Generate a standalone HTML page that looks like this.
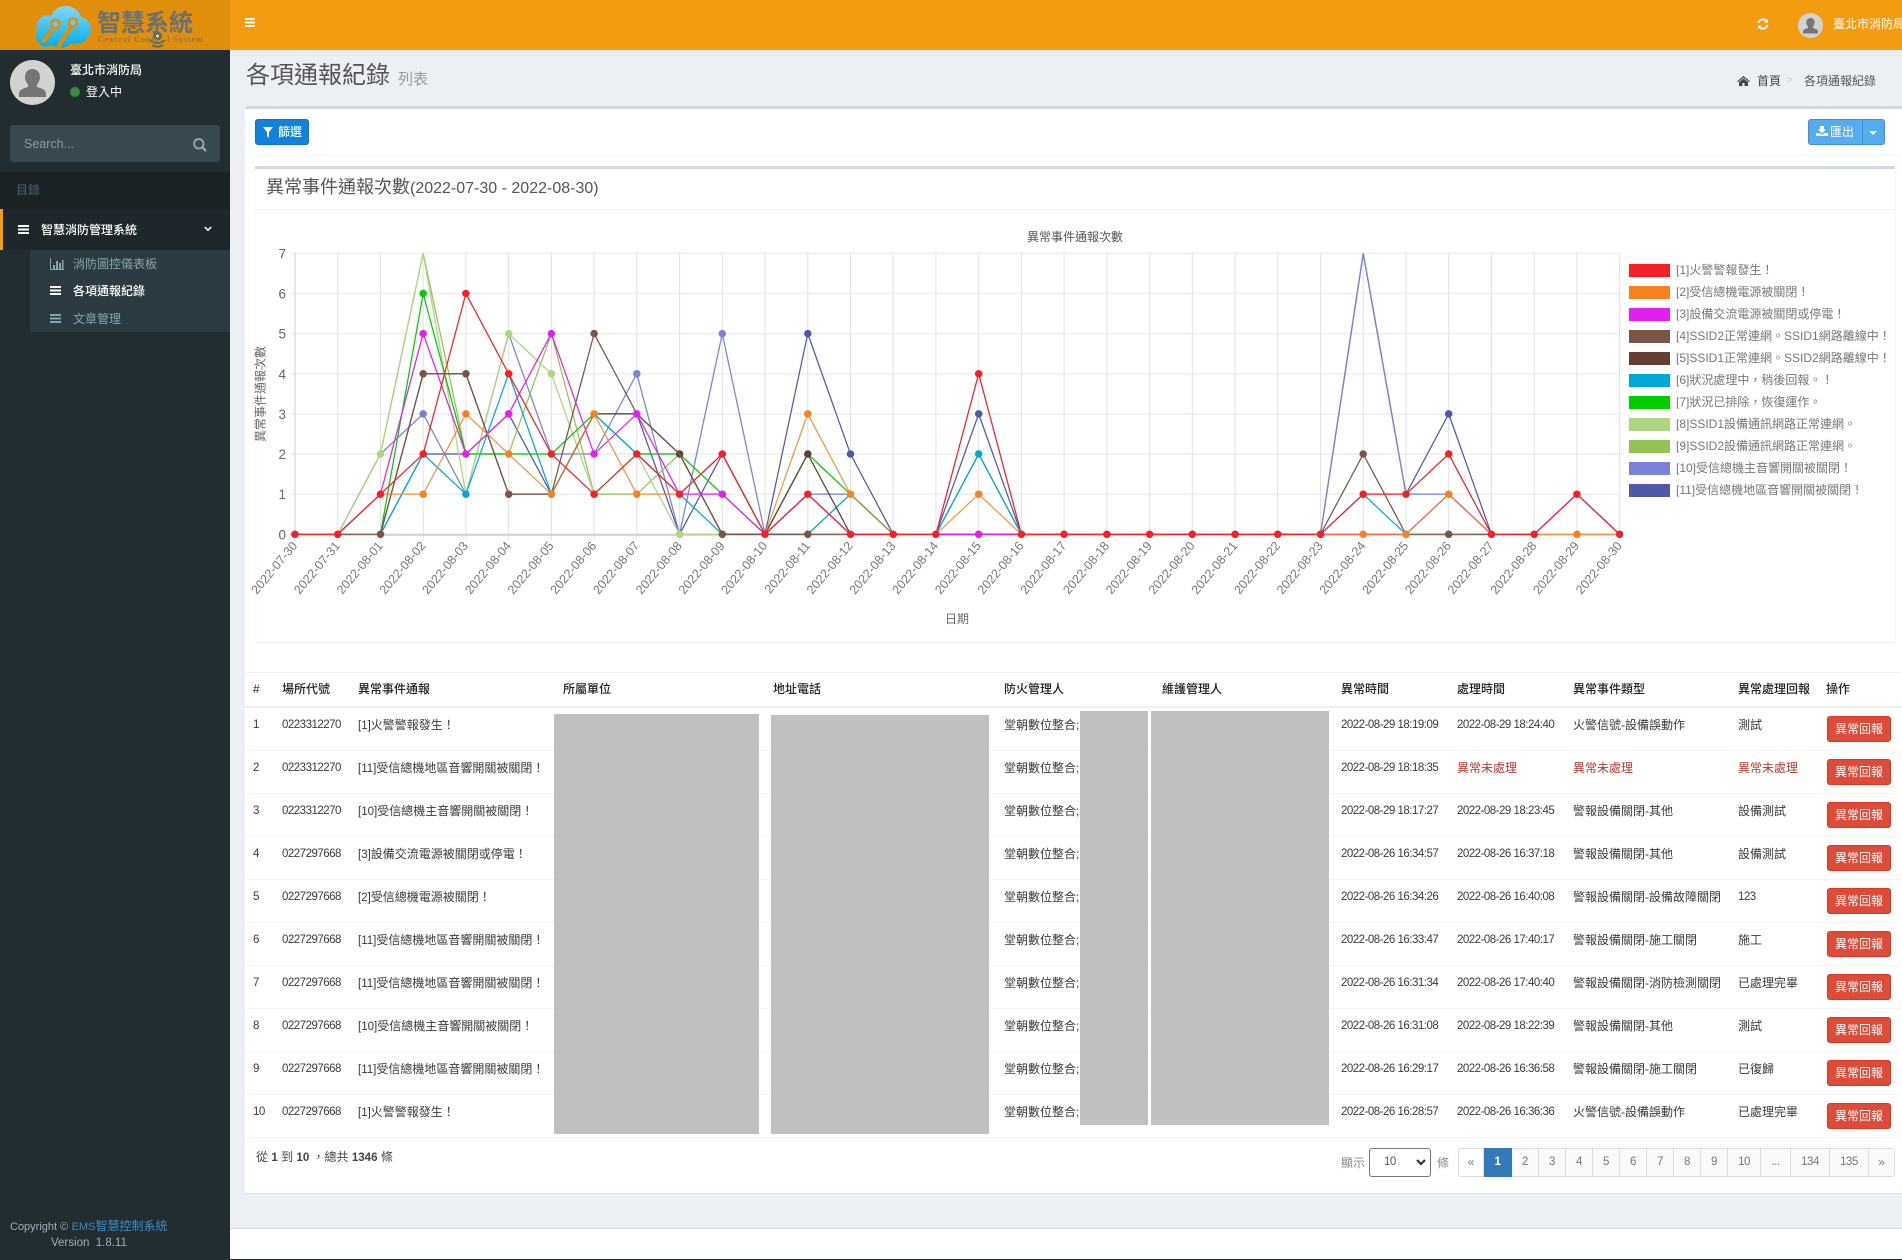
<!DOCTYPE html>
<html lang="zh-Hant"><head><meta charset="utf-8"><title>各項通報紀錄</title>
<style>
html,body{margin:0;padding:0}
body{width:1902px;height:1260px;overflow:hidden;position:relative;background:#222d32;font-family:"Liberation Sans","Noto Sans CJK TC",sans-serif;font-size:12px;color:#333}
.a{position:absolute;white-space:nowrap}
.n{font-size:11.5px;letter-spacing:-.5px}
.k{font-size:11.5px}
svg{position:absolute;overflow:visible}
table{position:absolute;left:245px;top:672px;width:1656px;border-collapse:collapse;table-layout:fixed}
th{height:34px;box-sizing:border-box;font-weight:500;text-align:left;padding:0 0 0 8px;color:#222;line-height:33px;border-top:1px solid #f0f0f0;border-bottom:2px solid #f0f0f0}
td{height:43px;box-sizing:border-box;vertical-align:top;padding:8px 0 0 8px;line-height:18px;border-bottom:1px solid #f4f4f4;white-space:nowrap;overflow:hidden;color:#3a3a3a}
td.r{color:#b03a33}
td.b{padding:8px 0 0 8px}
.btn{display:block;width:64px;height:26px;box-sizing:border-box;background:#dd4b39;border:1px solid #d73925;border-radius:3px;color:#fff;text-align:center;line-height:24px}
.g{position:absolute;background:#c0c0c0}
.p{position:absolute;top:1148px;height:29px;box-sizing:border-box;border:1px solid #ddd;border-left:0;background:#fafafa;color:#777;text-align:center;line-height:27px}
.s{transform:translate(295px,534.3px) scale(42.73,-40.13);vector-effect:non-scaling-stroke;fill:none;stroke-width:1.25}
.m{fill:none;stroke-linecap:round;stroke-width:7.5}
</style></head><body>

<!-- header -->
<div class="a" style="left:0;top:0;width:230px;height:50px;background:#e08e0b"></div>
<div class="a" style="left:230px;top:0;width:1672px;height:50px;background:#f39c12"></div>
<svg style="left:0;top:0" width="230" height="50">
<defs><linearGradient id="c" x1="0" y1="0" x2="0" y2="1"><stop offset="0" stop-color="#84d6f0"/><stop offset="1" stop-color="#00aeea"/></linearGradient></defs>
<path d="M46 47C37 46 34 36 37 29C35 20 44 13 51 16C56 2 77 3 81 17C91 19 94 31 88 37C85 44 76 44 70 44C64 50 55 48 52 45Z" fill="url(#c)"/>
<path d="M43 42L53 29M58 47L71 27" stroke="#e08e0b" stroke-width="4.500" fill="none"/>
<circle cx="55.500" cy="24" r="4" fill="#6cc9ea" stroke="#e08e0b" stroke-width="2.500"/><circle cx="73" cy="22.500" r="4" fill="#6cc9ea" stroke="#e08e0b" stroke-width="2.500"/>
<circle cx="157.500" cy="36" r="4.500" fill="#5f6a6a"/><circle cx="157.500" cy="36" r="1.300" fill="#fff"/>
<path d="M150 40q7.500 6 15 0M152 45q5.500 3.500 11 0" stroke="#5f6a6a" stroke-width="2" fill="none"/>
</svg>
<div class="a" style="left:97px;top:7px;font-size:24px;line-height:34px;font-weight:700;color:#697270">智慧系統</div>
<div class="a" style="left:98px;top:33px;font:700 8.500px/12px 'Liberation Serif',serif;letter-spacing:.75px;color:#8b7b4a">Central Contr<span style="visibility:hidden">o</span>&nbsp;l System</div>
<svg style="left:245px;top:18px" width="10" height="9"><path d="M0 0h10v2H0zM0 3.500h10v2H0zM0 7h10v2H0z" fill="#fff"/></svg>
<svg style="left:1757px;top:18px" width="12" height="12" viewBox="0 0 12 12"><path d="M1.500 5A4.600 4.600 0 0 1 9.500 3M10.500 7A4.600 4.600 0 0 1 2.500 9" fill="none" stroke="#fff" stroke-width="1.800"/><path d="M11 .8V4.500H7.300zM1 11.200V7.500H4.700z" fill="#fff"/></svg>
<svg style="left:1798px;top:13px" width="25" height="25" viewBox="0 0 45 45"><circle cx="22.500" cy="22.500" r="22.500" fill="#d2d2d2"/><path d="M22.500 9c5 0 7.500 4 7.500 8 0 3-1.500 6-3 7.500v2.500c4 1.500 9 2 9 7v3H9v-3c0-5 5-5.500 9-7v-2.500c-1.500-1.500-3-4.500-3-7.500 0-4 2.500-8 7.500-8z" fill="#757575"/></svg>
<div class="a" style="left:1833px;top:15px;line-height:18px;color:#fff;width:69px;overflow:hidden">臺北市消防局</div>

<!-- sidebar -->
<svg style="left:10px;top:60px" width="45" height="45" viewBox="0 0 45 45"><circle cx="22.500" cy="22.500" r="22.500" fill="#d2d2d2"/><path d="M22.500 9c5 0 7.500 4 7.500 8 0 3-1.500 6-3 7.500v2.500c4 1.500 9 2 9 7v3H9v-3c0-5 5-5.500 9-7v-2.500c-1.500-1.500-3-4.500-3-7.500 0-4 2.500-8 7.500-8z" fill="#757575"/></svg>
<div class="a" style="left:70px;top:61px;line-height:18px;color:#fff;font-weight:500">臺北市消防局</div>
<div class="a" style="left:70px;top:87px;width:10px;height:10px;border-radius:5px;background:#3c8a42"></div>
<div class="a" style="left:86px;top:83px;line-height:18px;color:#fff">登入中</div>
<div class="a" style="left:10px;top:125px;width:210px;height:37px;background:#374850;border-radius:3px"></div>
<div class="a" style="left:24px;top:135px;line-height:18px;font-size:12.500px;color:#8c9ca4">Search...</div>
<svg style="left:193px;top:138px" width="14" height="14" viewBox="0 0 14 14"><circle cx="5.800" cy="5.800" r="4.700" fill="none" stroke="#9aa9b0" stroke-width="1.900"/><path d="M9.200 9.200L13 13" stroke="#9aa9b0" stroke-width="2.400"/></svg>
<div class="a" style="left:0;top:172px;width:230px;height:37px;background:#1a2226"></div>
<div class="a" style="left:16px;top:181px;line-height:18px;color:#4b646f">目錄</div>
<div class="a" style="left:0;top:209px;width:230px;height:41px;background:#1e282c"></div>
<div class="a" style="left:0;top:209px;width:3px;height:41px;background:#f39c12"></div>
<svg style="left:18px;top:225px" width="11" height="9"><path d="M0 0h11v2H0zM0 3.500h11v2H0zM0 7h11v2H0z" fill="#fff"/></svg>
<div class="a" style="left:41px;top:221px;line-height:18px;color:#fff;font-weight:500">智慧消防管理系統</div>
<svg style="left:204px;top:226px" width="8" height="6"><path d="M.8 1L4 4.200 7.200 1" fill="none" stroke="#fff" stroke-width="1.500"/></svg>
<div class="a" style="left:30px;top:250px;width:200px;height:82px;background:#2c3b41"></div>
<svg style="left:50px;top:258px" width="14" height="12"><path d="M.5 0v11.500H14" fill="none" stroke="#8aa4af"/><path d="M3 7h2v4H3zM6 3h2v8H6zM9 5h2v6H9zM12 2h1.500v9H12z" fill="#8aa4af"/></svg>
<div class="a" style="left:73px;top:255px;line-height:18px;color:#8aa4af">消防圖控儀表板</div>
<svg style="left:50px;top:286px" width="11" height="9"><path d="M0 0h11v2H0zM0 3.500h11v2H0zM0 7h11v2H0z" fill="#fff"/></svg>
<div class="a" style="left:73px;top:281.500px;line-height:18px;color:#fff;font-weight:500">各項通報紀錄</div>
<svg style="left:50px;top:314px" width="11" height="9"><path d="M0 0h11v2H0zM0 3.500h11v2H0zM0 7h11v2H0z" fill="#8aa4af"/></svg>
<div class="a" style="left:73px;top:310px;line-height:18px;color:#8aa4af">文章管理</div>
<div class="a" style="left:10px;top:1217px;line-height:18px;color:#9db0b8"><span style="font-size:11px">Copyright ©</span> <span style="color:#3c8dbc"><span style="font-size:11px">EMS</span>智慧控制系統</span></div>
<div class="a" style="left:51px;top:1234px;line-height:18px;font-size:11.500px;color:#9db0b8">Version &nbsp;1.8.11</div>

<!-- content -->
<div class="a" style="left:230px;top:50px;width:1672px;height:1178px;background:#ecf0f5"></div>
<div class="a" style="left:230px;top:1228px;width:1672px;height:31px;background:#fff;border-top:1px solid #d2d6de;box-sizing:border-box"></div>
<div class="a" style="left:246px;top:59px;font-size:24px;line-height:34px;color:#555">各項通報紀錄</div>
<div class="a" style="left:398px;top:70px;font-size:15px;line-height:20px;color:#999">列表</div>
<svg style="left:1737px;top:76px" width="13" height="10" viewBox="0 0 13 10"><path d="M6.500 0L13 5.400l-.8.700L6.500 1.600.8 6.100 0 5.400zM2 6l4.500-3.500L11 6v4H7.500V7h-2v3H2z" fill="#444"/></svg>
<div class="a" style="left:1757px;top:72px;line-height:18px;color:#444">首頁</div>
<div class="a" style="left:1787px;top:72px;line-height:18px;font-size:10px;color:#ccc">&gt;</div>
<div class="a" style="left:1804px;top:72px;line-height:18px;color:#555">各項通報紀錄</div>

<!-- main box -->
<div class="a" style="left:245px;top:106px;width:1657px;height:1088px;box-sizing:border-box;background:#fff;border-top:3px solid #d2d6de;border-bottom:1px solid #dcdfe3;border-radius:3px 0 0 3px"></div>
<div class="a" style="left:255px;top:119px;width:54px;height:26px;box-sizing:border-box;background:#1183dc;border:1px solid #0d74c4;border-radius:3px;color:#fff;line-height:24px;padding-left:22px;font-weight:500">篩選</div>
<svg style="left:263px;top:127px" width="10" height="11"><path d="M0 0h10L6 5v6L4 9V5z" fill="#fff"/></svg>
<div class="a" style="left:1808px;top:119px;width:77px;height:26px;box-sizing:border-box;background:#55acee;border:1px solid #3f8fca;border-radius:3px"></div>
<div class="a" style="left:1861.500px;top:120px;width:1px;height:24px;background:#3f8fca"></div>
<svg style="left:1816px;top:126px" width="12" height="10" viewBox="0 0 12 10"><path d="M4 0h4v3.500h2.200L6 7.300 1.800 3.500H4zM0 7h3.500L6 8.700 8.500 7H12v3H0z" fill="#fff"/></svg>
<div class="a" style="left:1830px;top:123px;line-height:18px;color:#fff">匯出</div>
<svg style="left:1869px;top:131px" width="8" height="4"><path d="M0 0h8L4 4z" fill="#fff"/></svg>
<div class="a" style="left:245px;top:155px;width:1657px;height:1px;background:#f4f4f4"></div>
<div class="a" style="left:255px;top:166px;width:1640px;height:3px;background:#d2d6de"></div>
<div class="a" style="left:1895px;top:169px;width:1px;height:473px;background:#f6f6f6"></div>
<div class="a" style="left:255px;top:169px;width:1px;height:473px;background:#fbfbfb"></div>
<div class="a" style="left:266px;top:174px;font-size:18px;line-height:26px;color:#555">異常事件通報次數<span style="font-size:16px">(2022-07-30 - 2022-08-30)</span></div>
<div class="a" style="left:255px;top:209px;width:1640px;height:1px;background:#f4f4f4"></div>
<div class="a" style="left:255px;top:642px;width:1640px;height:1px;background:#eeeeee"></div>

<!-- chart -->
<svg style="left:0;top:0" width="1902" height="660" font-family="'Liberation Sans','Noto Sans CJK TC',sans-serif">
<g stroke="#f1f1f1" stroke-width="2"><path d="M290 253.400H1620M290 293.500H1620M290 333.600H1620M290 373.800H1620M290 413.900H1620M290 454H1620M290 494.200H1620"/></g>
<g stroke="#e2e2e2" stroke-width="1" fill="none"><path d="M295 253V540M337.700 253V540M380.500 253V540M423.200 253V540M465.900 253V540M508.700 253V540M551.400 253V540M594.100 253V540M636.800 253V540M679.600 253V540M722.300 253V540M765 253V540M807.800 253V540M850.500 253V540M893.200 253V540M935.900 253V540M978.700 253V540M1021.400 253V540M1064.100 253V540M1106.900 253V540M1149.600 253V540M1192.300 253V540M1235.100 253V540M1277.800 253V540M1320.500 253V540M1363.200 253V540M1406 253V540M1448.700 253V540M1491.400 253V540M1534.200 253V540M1576.900 253V540M1619.600 253V540"/></g>
<path d="M295 253V535" stroke="#cfcfcf"/><path d="M290 534.800H1620" stroke="#cfcfcf" stroke-width="2"/>
<g font-size="13.500" fill="#666" text-anchor="end"><text x="286" y="258.500">7</text><text x="286" y="298.500">6</text><text x="286" y="338.500">5</text><text x="286" y="379">4</text><text x="286" y="419">3</text><text x="286" y="459">2</text><text x="286" y="499">1</text><text x="286" y="539.500">0</text></g>
<text x="1075" y="241" font-size="12" fill="#555" text-anchor="middle">異常事件通報次數</text>
<text x="957" y="623" font-size="12" fill="#666" text-anchor="middle">日期</text>
<text transform="translate(264.500 394) rotate(-90)" font-size="12" fill="#666" text-anchor="middle">異常事件通報次數</text>
<g font-size="12.500" fill="#777" text-anchor="end">
<text transform="translate(298 546) rotate(-50)">2022-07-30</text>
<text transform="translate(340.700 546) rotate(-50)">2022-07-31</text>
<text transform="translate(383.500 546) rotate(-50)">2022-08-01</text>
<text transform="translate(426.200 546) rotate(-50)">2022-08-02</text>
<text transform="translate(468.900 546) rotate(-50)">2022-08-03</text>
<text transform="translate(511.700 546) rotate(-50)">2022-08-04</text>
<text transform="translate(554.400 546) rotate(-50)">2022-08-05</text>
<text transform="translate(597.100 546) rotate(-50)">2022-08-06</text>
<text transform="translate(639.800 546) rotate(-50)">2022-08-07</text>
<text transform="translate(682.600 546) rotate(-50)">2022-08-08</text>
<text transform="translate(725.300 546) rotate(-50)">2022-08-09</text>
<text transform="translate(768 546) rotate(-50)">2022-08-10</text>
<text transform="translate(810.800 546) rotate(-50)">2022-08-11</text>
<text transform="translate(853.500 546) rotate(-50)">2022-08-12</text>
<text transform="translate(896.200 546) rotate(-50)">2022-08-13</text>
<text transform="translate(938.900 546) rotate(-50)">2022-08-14</text>
<text transform="translate(981.700 546) rotate(-50)">2022-08-15</text>
<text transform="translate(1024.400 546) rotate(-50)">2022-08-16</text>
<text transform="translate(1067.100 546) rotate(-50)">2022-08-17</text>
<text transform="translate(1109.900 546) rotate(-50)">2022-08-18</text>
<text transform="translate(1152.600 546) rotate(-50)">2022-08-19</text>
<text transform="translate(1195.300 546) rotate(-50)">2022-08-20</text>
<text transform="translate(1238.100 546) rotate(-50)">2022-08-21</text>
<text transform="translate(1280.800 546) rotate(-50)">2022-08-22</text>
<text transform="translate(1323.500 546) rotate(-50)">2022-08-23</text>
<text transform="translate(1366.200 546) rotate(-50)">2022-08-24</text>
<text transform="translate(1409 546) rotate(-50)">2022-08-25</text>
<text transform="translate(1451.700 546) rotate(-50)">2022-08-26</text>
<text transform="translate(1494.400 546) rotate(-50)">2022-08-27</text>
<text transform="translate(1537.200 546) rotate(-50)">2022-08-28</text>
<text transform="translate(1579.900 546) rotate(-50)">2022-08-29</text>
<text transform="translate(1622.600 546) rotate(-50)">2022-08-30</text>
</g>

<!-- S11 -->
<polyline class="s" stroke="#5059a8" points="2,0 3,2 4,2 5,3 6,1 7,3 8,3 9,0 10,2 11,0 12,5 13,2 14,0 15,0 16,3 17,0 24,0 25,7 26,1 27,3 28,0"/>
<path class="m" stroke="#5059a8" d="M807.800 333.600h0M850.500 454h0M978.700 413.900h0M1448.700 413.900h0"/>
<!-- S10 -->
<polyline class="s" stroke="#7a82d8" points="1,0 2,2 3,3 4,1 5,5 6,2 7,2 8,4 9,0 10,5 11,0 12,1 13,1 14,0 24,0 25,7 26,1 27,1 28,0"/>
<path class="m" stroke="#7a82d8" d="M423.200 413.900h0M636.800 373.800h0M722.300 333.600h0"/>
<!-- S9 -->
<polyline class="s" stroke="#92c356" points="1,0 2,2 3,7 4,2 5,2 6,5 7,1 8,1 9,2 10,0 12,0 13,1 14,0"/>
<!-- S8 -->
<polyline class="s" stroke="#aed581" points="1,0 2,2 3,7 4,1 5,5 6,4 7,1 8,2 9,0 10,0 11,0"/>
<path class="m" stroke="#aed581" d="M380.500 454h0M508.700 333.600h0M551.400 373.800h0M679.600 534.300h0"/>
<!-- S7 -->
<polyline class="s" stroke="#00cc00" points="2,0 3,6 4,2 5,2 6,2 7,3 8,2 9,2 10,1 11,0 12,2 13,1 14,0 15,0 16,2 17,0"/>
<path class="m" stroke="#00cc00" d="M423.200 293.500h0"/>
<!-- S6 -->
<polyline class="s" stroke="#00a8d8" points="2,0 3,2 4,1 5,4 6,1 7,3 8,2 9,1 10,0 12,0 13,1 14,0 15,0 16,2 17,0 24,0 25,1 26,0"/>
<path class="m" stroke="#00a8d8" d="M465.900 494.200h0M978.700 454h0"/>
<!-- S5 -->
<polyline class="s" stroke="#5d4037" points="2,0 3,4 4,4 5,1 6,1 7,3 8,3 9,2 10,0 11,0 12,2 13,0"/>
<path class="m" stroke="#5d4037" d="M679.600 454h0M807.800 454h0"/>
<!-- S4 -->
<polyline class="s" stroke="#795548" points="1,0 2,0 3,4 4,4 5,1 6,1 7,5 8,3 9,2 10,0 11,0 24,0 25,2 26,0 28,0"/>
<path class="m" stroke="#795548" d="M380.500 534.300h0M423.200 373.800h0M465.900 373.800h0M508.700 494.200h0M594.100 333.600h0M722.300 534.300h0M807.800 534.300h0M1363.200 454h0M1448.700 534.300h0"/>
<!-- S3 -->
<polyline class="s" stroke="#e020f0" points="1,0 2,1 3,5 4,2 5,3 6,5 7,2 8,3 9,1 10,1 11,0 12,1 13,0 26,0 27,1 28,0 29,0 30,1 31,0"/>
<path class="m" stroke="#e020f0" d="M423.200 333.600h0M465.900 454h0M508.700 413.900h0M551.400 333.600h0M594.100 454h0M636.800 413.900h0M722.300 494.200h0M978.700 534.300h0"/>
<!-- S2 -->
<polyline class="s" stroke="#f58220" stroke-opacity=".85" points="0,0 1,0 2,1 3,1 4,3 5,2 6,1 7,3 8,1 9,1 10,2 11,0 12,3 13,1 14,0 15,0 16,1 17,0 26,0 27,1 28,0 31,0"/>
<path class="m" stroke="#f58220" d="M423.200 494.200h0M465.900 413.900h0M508.700 454h0M551.400 494.200h0M594.100 413.900h0M636.800 494.200h0M807.800 413.900h0M850.500 494.200h0M978.700 494.200h0M1363.200 534.300h0M1406 534.300h0M1448.700 494.200h0M1576.900 534.300h0"/>
<!-- S1 -->
<polyline class="s" stroke="#f42028" points="0,0 1,0 2,1 3,2 4,6 5,4 6,2 7,1 8,2 9,1 10,2 11,0 12,1 13,0 14,0 15,0 16,4 17,0 24,0 25,1 26,1 27,2 28,0 29,0 30,1 31,0"/>
<path class="m" stroke="#f42028" d="M295 534.300h0M337.700 534.300h0M380.500 494.200h0M423.200 454h0M465.900 293.500h0M508.700 373.800h0M551.400 454h0M594.100 494.200h0M636.800 454h0M679.600 494.200h0M722.300 454h0M765 534.300h0M807.800 494.200h0M850.500 534.300h0M893.200 534.300h0M935.900 534.300h0M978.700 373.800h0M1021.400 534.300h0M1064.100 534.300h0M1106.900 534.300h0M1149.600 534.300h0M1192.300 534.300h0M1235.100 534.300h0M1277.800 534.300h0M1320.500 534.300h0M1363.200 494.200h0M1406 494.200h0M1448.700 454h0M1491.400 534.300h0M1534.200 534.300h0M1576.900 494.200h0M1619.600 534.300h0"/>

<!-- legend -->
<g font-size="12" fill="#777">
<rect x="1629" y="264" width="41" height="13" fill="#f42028"/><text x="1676" y="274">[1]火警警報發生！</text>
<rect x="1629" y="286" width="41" height="13" fill="#f58220"/><text x="1676" y="296">[2]受信總機電源被關閉！</text>
<rect x="1629" y="308" width="41" height="13" fill="#e020f0"/><text x="1676" y="318">[3]設備交流電源被關閉或停電！</text>
<rect x="1629" y="330" width="41" height="13" fill="#795548"/><text x="1676" y="340">[4]SSID2正常連網。SSID1網路離線中！</text>
<rect x="1629" y="352" width="41" height="13" fill="#653f32"/><text x="1676" y="362">[5]SSID1正常連網。SSID2網路離線中！</text>
<rect x="1629" y="374" width="41" height="13" fill="#00a8d8"/><text x="1676" y="384">[6]狀況處理中，稍後回報。！</text>
<rect x="1629" y="396" width="41" height="13" fill="#00cc00"/><text x="1676" y="406">[7]狀況已排除，恢復運作。</text>
<rect x="1629" y="418" width="41" height="13" fill="#aed581"/><text x="1676" y="428">[8]SSID1設備通訊網路正常連網。</text>
<rect x="1629" y="440" width="41" height="13" fill="#92c356"/><text x="1676" y="450">[9]SSID2設備通訊網路正常連網。</text>
<rect x="1629" y="462" width="41" height="13" fill="#7a82d8"/><text x="1676" y="472">[10]受信總機主音響開關被關閉！</text>
<rect x="1629" y="484" width="41" height="13" fill="#5059a8"/><text x="1676" y="494">[11]受信總機地區音響開關被關閉！</text>
</g>
</svg>

<!-- table -->
<table>
<colgroup><col style="width:29px"><col style="width:76px"><col style="width:205px"><col style="width:210px"><col style="width:231px"><col style="width:158px"><col style="width:179px"><col style="width:116px"><col style="width:116px"><col style="width:165px"><col style="width:89px"><col style="width:82px"></colgroup>
<thead><tr><th>#</th><th>場所代號</th><th>異常事件通報</th><th>所屬單位</th><th>地址電話</th><th>防火管理人</th><th>維護管理人</th><th>異常時間</th><th>處理時間</th><th>異常事件類型</th><th>異常處理回報</th><th style="padding-left:7px">操作</th></tr></thead>
<tbody>
<tr><td class="n">1</td><td class="n">0223312270</td><td><span class="k">[1]</span>火警警報發生！</td><td></td><td></td><td>堂朝數位整合;</td><td></td><td class="n">2022-08-29 18:19:09</td><td class="n">2022-08-29 18:24:40</td><td>火警信號-設備誤動作</td><td>測試</td><td class="b"><a class="btn">異常回報</a></td></tr>
<tr><td class="n">2</td><td class="n">0223312270</td><td><span class="k">[11]</span>受信總機地區音響開關被關閉！</td><td></td><td></td><td>堂朝數位整合;</td><td></td><td class="n">2022-08-29 18:18:35</td><td class="r">異常未處理</td><td class="r">異常未處理</td><td class="r">異常未處理</td><td class="b"><a class="btn">異常回報</a></td></tr>
<tr><td class="n">3</td><td class="n">0223312270</td><td><span class="k">[10]</span>受信總機主音響開關被關閉！</td><td></td><td></td><td>堂朝數位整合;</td><td></td><td class="n">2022-08-29 18:17:27</td><td class="n">2022-08-29 18:23:45</td><td>警報設備關閉-其他</td><td>設備測試</td><td class="b"><a class="btn">異常回報</a></td></tr>
<tr><td class="n">4</td><td class="n">0227297668</td><td><span class="k">[3]</span>設備交流電源被關閉或停電！</td><td></td><td></td><td>堂朝數位整合;</td><td></td><td class="n">2022-08-26 16:34:57</td><td class="n">2022-08-26 16:37:18</td><td>警報設備關閉-其他</td><td>設備測試</td><td class="b"><a class="btn">異常回報</a></td></tr>
<tr><td class="n">5</td><td class="n">0227297668</td><td><span class="k">[2]</span>受信總機電源被關閉！</td><td></td><td></td><td>堂朝數位整合;</td><td></td><td class="n">2022-08-26 16:34:26</td><td class="n">2022-08-26 16:40:08</td><td>警報設備關閉-設備故障關閉</td><td class="n">123</td><td class="b"><a class="btn">異常回報</a></td></tr>
<tr><td class="n">6</td><td class="n">0227297668</td><td><span class="k">[11]</span>受信總機地區音響開關被關閉！</td><td></td><td></td><td>堂朝數位整合;</td><td></td><td class="n">2022-08-26 16:33:47</td><td class="n">2022-08-26 17:40:17</td><td>警報設備關閉-施工關閉</td><td>施工</td><td class="b"><a class="btn">異常回報</a></td></tr>
<tr><td class="n">7</td><td class="n">0227297668</td><td><span class="k">[11]</span>受信總機地區音響開關被關閉！</td><td></td><td></td><td>堂朝數位整合;</td><td></td><td class="n">2022-08-26 16:31:34</td><td class="n">2022-08-26 17:40:40</td><td>警報設備關閉-消防檢測關閉</td><td>已處理完畢</td><td class="b"><a class="btn">異常回報</a></td></tr>
<tr><td class="n">8</td><td class="n">0227297668</td><td><span class="k">[10]</span>受信總機主音響開關被關閉！</td><td></td><td></td><td>堂朝數位整合;</td><td></td><td class="n">2022-08-26 16:31:08</td><td class="n">2022-08-29 18:22:39</td><td>警報設備關閉-其他</td><td>測試</td><td class="b"><a class="btn">異常回報</a></td></tr>
<tr><td class="n">9</td><td class="n">0227297668</td><td><span class="k">[11]</span>受信總機地區音響開關被關閉！</td><td></td><td></td><td>堂朝數位整合;</td><td></td><td class="n">2022-08-26 16:29:17</td><td class="n">2022-08-26 16:36:58</td><td>警報設備關閉-施工關閉</td><td>已復歸</td><td class="b"><a class="btn">異常回報</a></td></tr>
<tr><td class="n">10</td><td class="n">0227297668</td><td><span class="k">[1]</span>火警警報發生！</td><td></td><td></td><td>堂朝數位整合;</td><td></td><td class="n">2022-08-26 16:28:57</td><td class="n">2022-08-26 16:36:36</td><td>火警信號-設備誤動作</td><td>已處理完畢</td><td class="b"><a class="btn">異常回報</a></td></tr>
</tbody></table>
<div class="g" style="left:554px;top:714px;width:205px;height:420px"></div>
<div class="g" style="left:771px;top:715px;width:218px;height:419px"></div>
<div class="g" style="left:1080px;top:711px;width:68px;height:414px"></div>
<div class="g" style="left:1151px;top:711px;width:178px;height:414px"></div>

<!-- footer of box -->
<div class="a" style="left:256px;top:1148px;line-height:18px;color:#444">從 <b class="k">1</b> 到 <b class="k">10</b> ，總共 <b class="k">1346</b> 條</div>
<div class="a" style="left:1341px;top:1154px;line-height:18px;color:#888">顯示</div>
<div class="a n" style="left:1369px;top:1148px;width:62px;height:29px;box-sizing:border-box;border:1px solid #767676;border-radius:3px;background:#fff;line-height:27px;padding-left:14px;color:#555">10</div>
<svg style="left:1416px;top:1159px" width="10" height="7"><path d="M1 1l4 4 4-4" fill="none" stroke="#333" stroke-width="2.200"/></svg>
<div class="a" style="left:1437px;top:1154px;line-height:18px;color:#888">條</div>
<div class="p" style="left:1458px;width:26px;background:#fff;border-left:1px solid #ddd;border-radius:3px 0 0 3px">«</div>
<div class="p n" style="left:1484px;width:28px;background:#337ab7;border-color:#337ab7;color:#fff;font-weight:700">1</div>
<div class="p n" style="left:1512px;width:27px">2</div>
<div class="p n" style="left:1539px;width:27px">3</div>
<div class="p n" style="left:1566px;width:27px">4</div>
<div class="p n" style="left:1593px;width:27px">5</div>
<div class="p n" style="left:1620px;width:27px">6</div>
<div class="p n" style="left:1647px;width:27px">7</div>
<div class="p n" style="left:1674px;width:27px">8</div>
<div class="p n" style="left:1701px;width:27px">9</div>
<div class="p n" style="left:1728px;width:33px">10</div>
<div class="p n" style="left:1761px;width:30px">...</div>
<div class="p n" style="left:1791px;width:39px">134</div>
<div class="p n" style="left:1830px;width:39px">135</div>
<div class="p" style="left:1869px;width:26px;border-radius:0 3px 3px 0">»</div>
</body></html>
